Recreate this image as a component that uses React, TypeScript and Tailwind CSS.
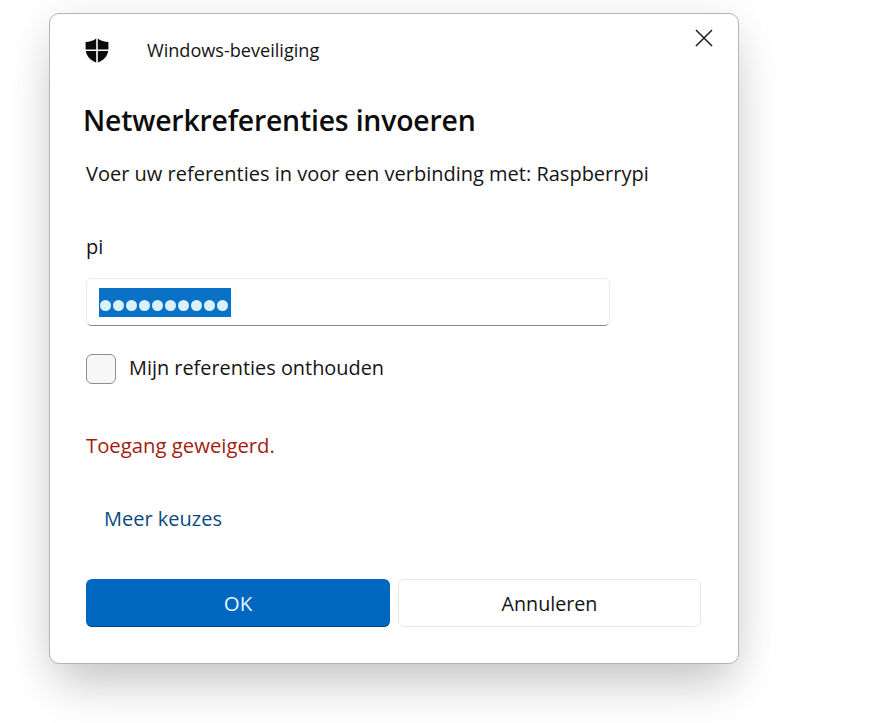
import * as React from "react";

function ShieldIcon() {
  return (
    <svg width="24" height="25" viewBox="0 0 24 25" fill="#0c0c0c">
      {/* four quarters with a white cross between */}
      <path d="M11.2 0.4 C8.6 2.6 4.4 3.9 0.6 4 L0.6 11.4 L11.2 11.4 Z" />
      <path d="M12.8 0.4 C15.4 2.6 19.6 3.9 23.4 4 L23.4 11.4 L12.8 11.4 Z" />
      <path d="M0.8 13 C1.6 18.4 5.6 22.4 11.2 24.6 L11.2 13 Z" />
      <path d="M23.2 13 C22.4 18.4 18.4 22.4 12.8 24.6 L12.8 13 Z" />
    </svg>
  );
}

function CloseIcon() {
  return (
    <svg width="18" height="18" viewBox="0 0 18 18" fill="none" stroke="#1c1c1c" strokeWidth="1.5">
      <path d="M1 1 L17 17 M17 1 L1 17" />
    </svg>
  );
}

export default function App() {
  const dots = Array.from({ length: 10 });

  return (
    <div className="h-[723px] w-[876px] overflow-hidden bg-white pl-[49px] pt-[13px] font-['Open_Sans','Noto_Sans',sans-serif] text-[#141414]">
      <div className="relative h-[651px] w-[690px] rounded-[10px] border border-[#b4b4b4] bg-white pl-[36px] pr-[36px] shadow-[0_28px_48px_-8px_rgba(0,0,0,0.2),0_0_44px_rgba(0,0,0,0.07)]">
        <button className="absolute right-[25px] top-[15px]">
          <CloseIcon />
        </button>

        {/* title bar */}
        <div className="-ml-[1px] flex items-center pt-[23px]">
          <ShieldIcon />
          <span className="ml-[38px] text-[18.1px] leading-[26px]">Windows-beveiliging</span>
        </div>

        <h1 className="-ml-[3px] mt-[37px] text-[28.4px] font-semibold leading-[40px] tracking-[-0.2px] text-[#0d0d0d]">
          Netwerkreferenties invoeren
        </h1>

        <p className="mt-[19px] text-[20px] leading-[30px]">
          Voer uw referenties in voor een verbinding met: Raspberrypi
        </p>

        <p className="mt-[43px] text-[20px] leading-[30px]">pi</p>

        {/* password field */}
        <div className="mt-[16px] flex h-[48px] w-[524px] items-center rounded-[5px] border border-[#ececec] border-b-[#8a8a8a] pl-[12px]">
          <div className="flex h-[29px] w-[132px] items-center gap-[2px] bg-[#0a72c6] pl-[1px] pt-[6px]">
            {dots.map((_, i) => (
              <span key={i} className="h-[11px] w-[11px] rounded-full bg-[#d9f1fb]" />
            ))}
          </div>
        </div>

        <div className="mt-[28px] flex items-start">
          <span className="h-[30px] w-[30px] rounded-[6px] border border-[#8e8e8e] bg-[#f7f7f7]" />
          <span className="ml-[13px] text-[19.9px] leading-[28px]">Mijn referenties onthouden</span>
        </div>

        <p className="mt-[46px] text-[20.3px] leading-[30px] text-[#a11d12]">Toegang geweigerd.</p>

        <a className="ml-[18px] mt-[44px] block text-[20px] leading-[30px] text-[#0b4a80]">Meer keuzes</a>

        {/* buttons */}
        <div className="mt-[45px] flex items-start gap-[8px]">
          <button className="flex h-[48px] w-[304px] items-center justify-center rounded-[6px] border-b border-[#00437e] bg-[#0067c0] pt-[2px] text-[20.5px] text-[#e6f6fd]">
            OK
          </button>
          <button className="flex h-[48px] w-[303px] items-center justify-center rounded-[6px] border border-[#e8e8e8] bg-white pt-[2px] text-[19.7px]">
            Annuleren
          </button>
        </div>
      </div>
    </div>
  );
}
